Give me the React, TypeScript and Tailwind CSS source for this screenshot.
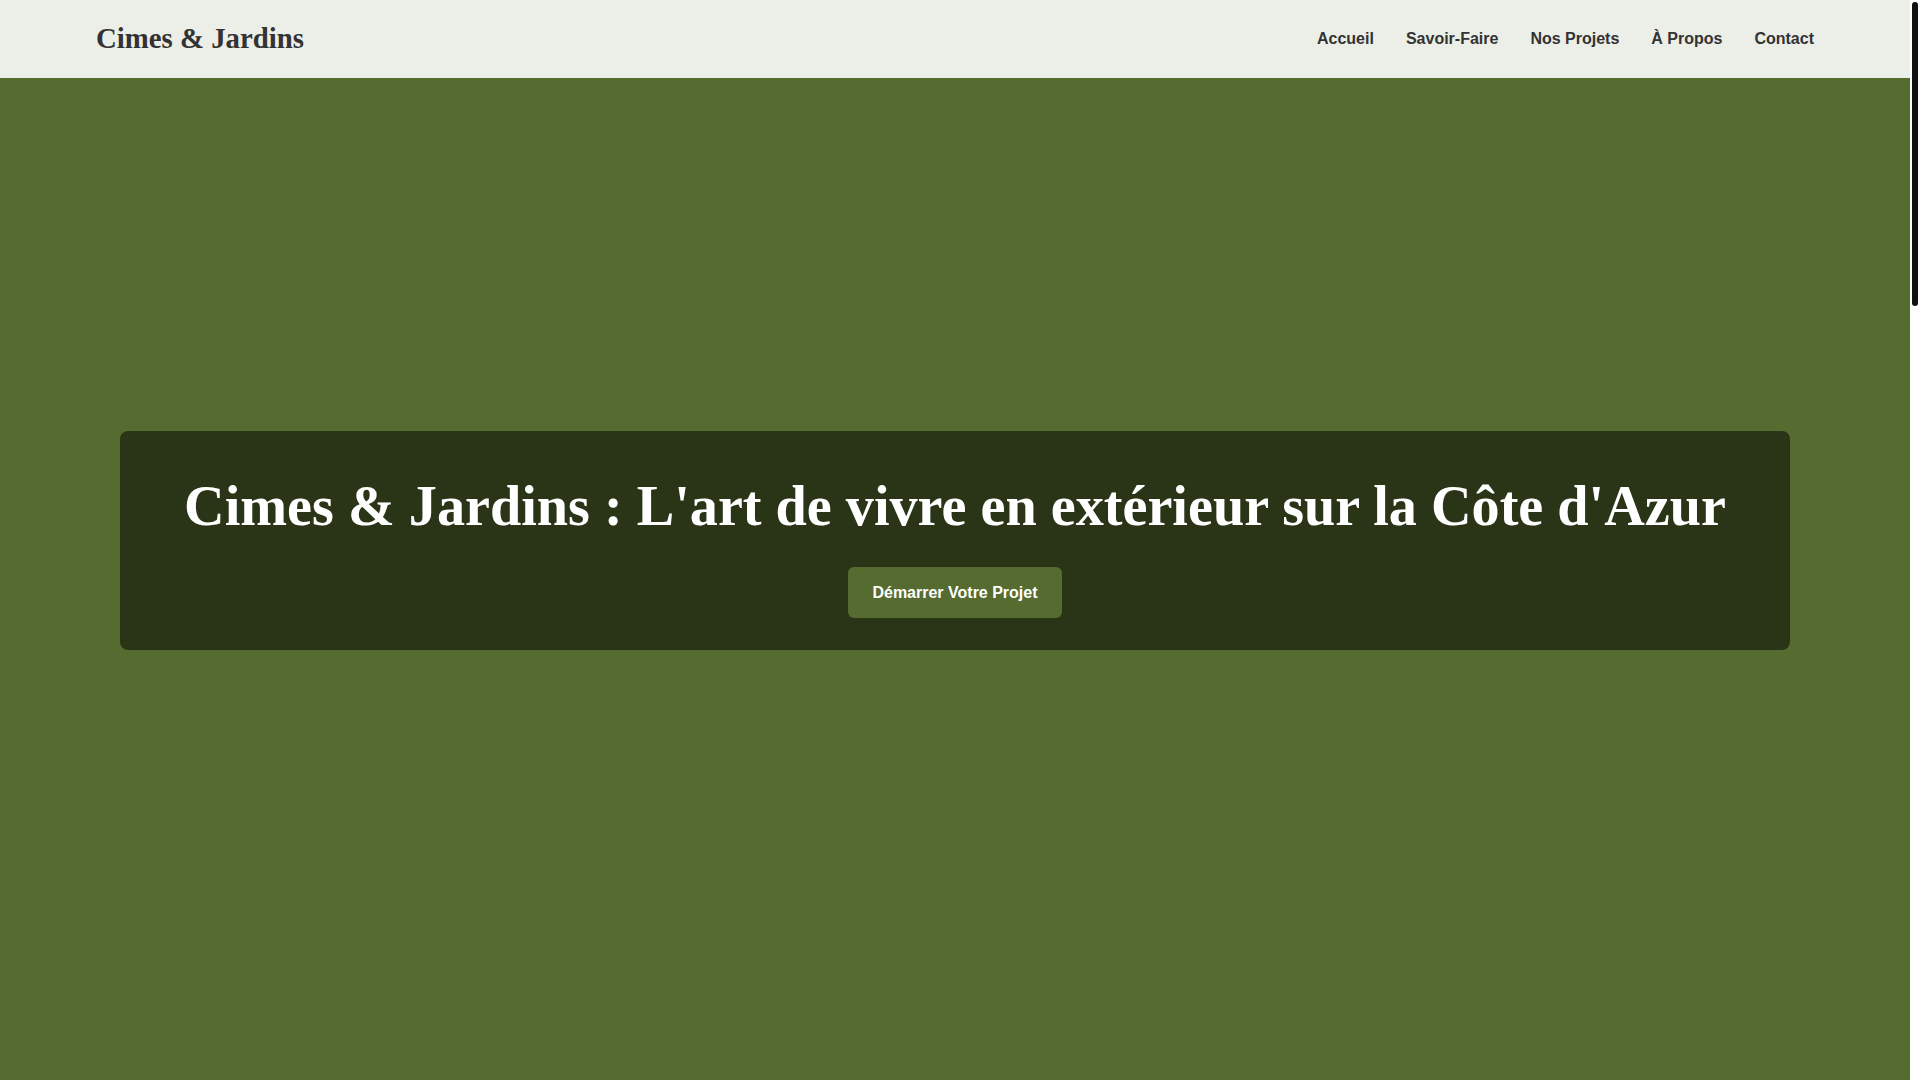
const navLinks = ["Accueil", "Savoir-Faire", "Nos Projets", "À Propos", "Contact"]

function Header() {
  return (
    <header className="fixed top-0 left-0 right-[10px] z-10 h-[78px] bg-[#eceee8] px-24 flex items-center justify-between">
      <a href="#accueil" className="font-['Liberation_Serif',serif] text-[28.8px] font-bold text-[#333]">
        Cimes &amp; Jardins
      </a>
      <nav className="flex items-center gap-8">
        {navLinks.map((link) => (
          <a key={link} href="#" className="font-['Liberation_Sans',Arial,sans-serif] text-base font-bold text-[#333]">
            {link}
          </a>
        ))}
      </nav>
    </header>
  )
}

function Hero() {
  return (
    <section id="accueil" className="h-screen bg-[#556b2f] px-[120px] flex items-center justify-center">
      <div className="w-full rounded-lg bg-black/50 px-8 pt-[44px] pb-[32px] flex flex-col items-center">
        <h1 className="font-['Liberation_Serif',serif] text-[56.2px] leading-[62px] font-bold text-white text-center">
          Cimes &amp; Jardins : L'art de vivre en extérieur sur la Côte d'Azur
        </h1>
        <a
          href="#contact"
          className="mt-[30px] rounded-md bg-[#556b2f] px-6 py-4 font-['Liberation_Sans',Arial,sans-serif] text-base leading-[19px] font-bold text-white"
        >
          Démarrer Votre Projet
        </a>
      </div>
    </section>
  )
}

export default function App() {
  return (
    <div className="bg-white pr-[10px]">
      <Header />
      <Hero />
      {/* scrollbar thumb on the right edge */}
      <div className="fixed top-[2px] right-[2px] z-20 h-[304px] w-[6px] rounded-full bg-[#111]" />
    </div>
  )
}
